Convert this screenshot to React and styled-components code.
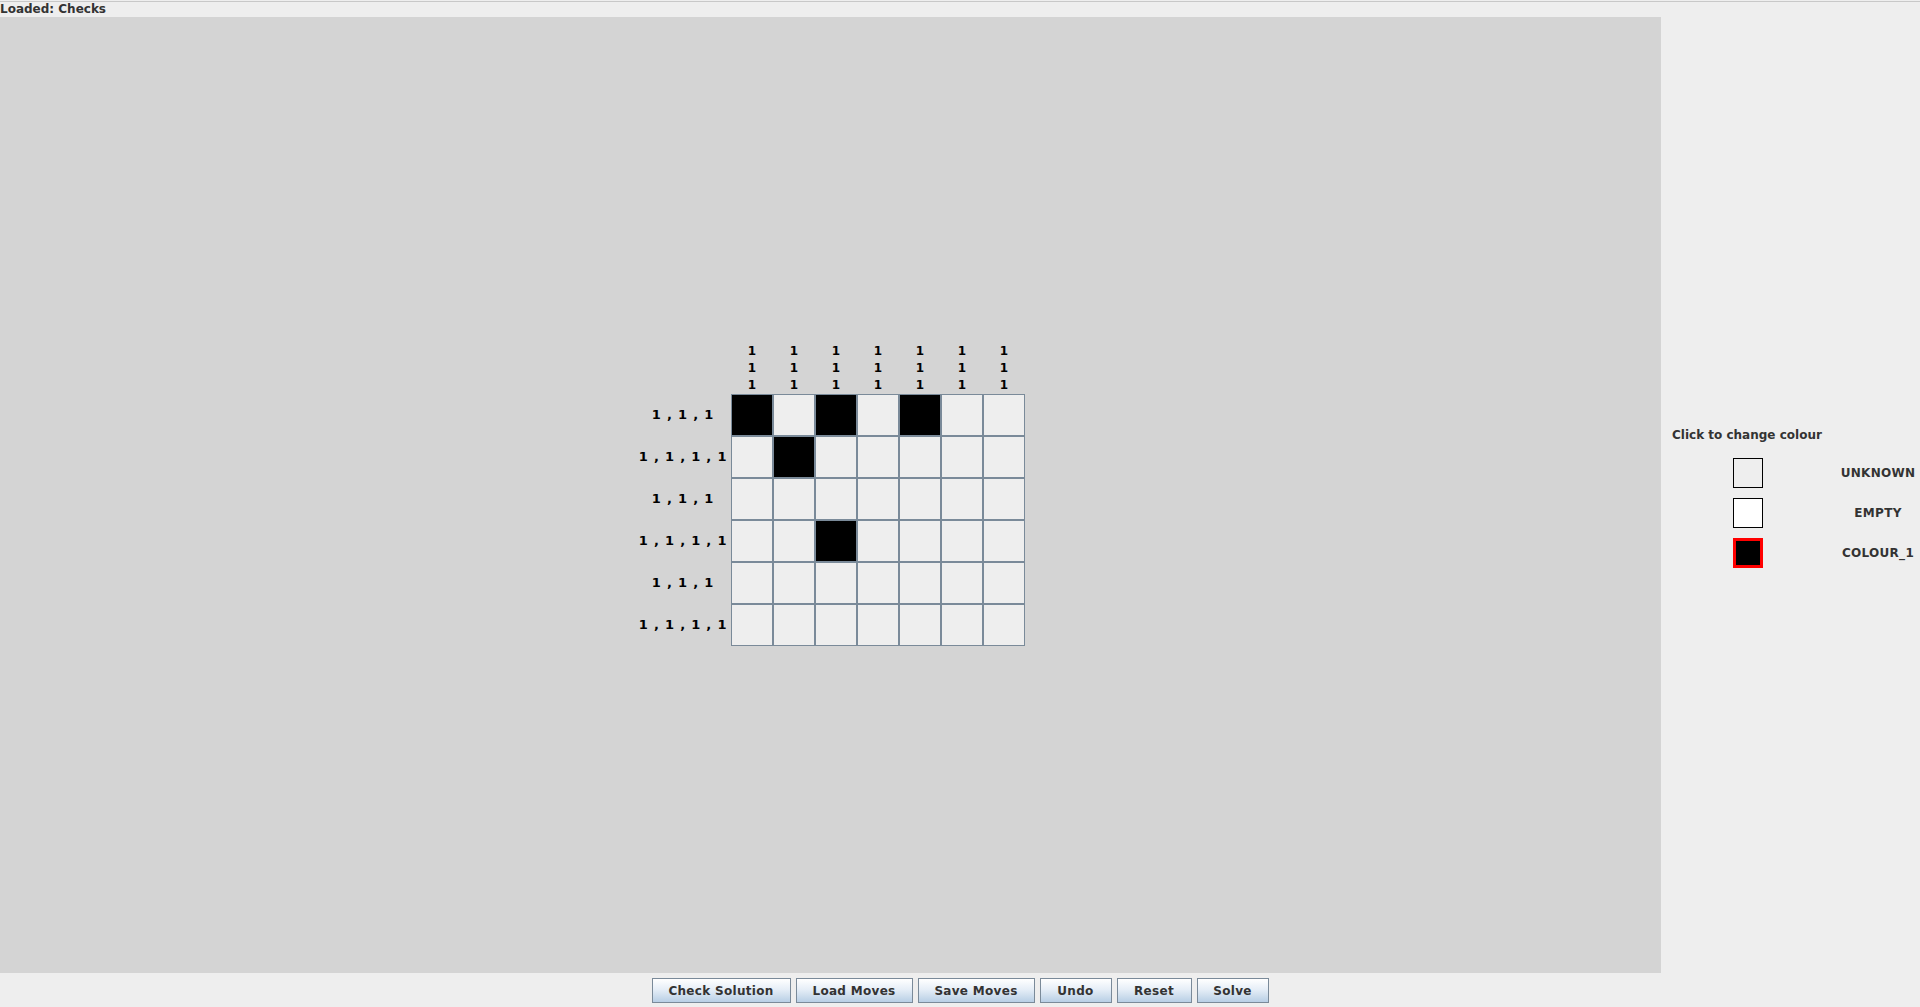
import React from 'react';
import styled, { createGlobalStyle } from 'styled-components';

const GlobalStyle = createGlobalStyle`
    html, body {
        margin: 0;
        padding: 0;
        background: #eeeeee;
        font-family: "DejaVu Sans", "Liberation Sans", sans-serif;
        overflow: hidden;
    }
`;

// puzzle data
const COLS = 7;
const ROWS = 6;
const colClues = Array.from({ length: COLS }, () => [1, 1, 1]);
const rowClues = [
    [1, 1, 1],
    [1, 1, 1, 1],
    [1, 1, 1],
    [1, 1, 1, 1],
    [1, 1, 1],
    [1, 1, 1, 1],
];
const filled = ['0-0', '0-2', '0-4', '1-1', '3-2'];

const palette = [
    { name: 'UNKNOWN', color: '#eeeeee' },
    { name: 'EMPTY', color: '#ffffff' },
    { name: 'COLOUR_1', color: '#000000', selected: true },
];

const buttons = [
    { label: 'Check Solution', width: 139 },
    { label: 'Load Moves', width: 117 },
    { label: 'Save Moves', width: 117 },
    { label: 'Undo', width: 72 },
    { label: 'Reset', width: 75 },
    { label: 'Solve', width: 72 },
];

const App = () => {
    return (
        <React.Fragment>
            <GlobalStyle />
            <Frame>
                <StatusBar>Loaded: Checks</StatusBar>
                <Main>
                    <PuzzleArea>
                        <Puzzle>
                            <Corner />
                            <ColClues>
                                {colClues.map((clue, c) => (
                                    <ColClue key={c}>
                                        {clue.map((n, i) => (
                                            <ClueLine key={i}>{n}</ClueLine>
                                        ))}
                                    </ColClue>
                                ))}
                            </ColClues>
                            <RowClues>
                                {rowClues.map((clue, r) => (
                                    <RowClue key={r}>{clue.join(' , ')}</RowClue>
                                ))}
                            </RowClues>
                            <Board>
                                {Array.from({ length: ROWS * COLS }, (_, i) => {
                                    const r = Math.floor(i / COLS);
                                    const c = i % COLS;
                                    return <Cell key={i} $filled={filled.includes(`${r}-${c}`)} />;
                                })}
                            </Board>
                        </Puzzle>
                    </PuzzleArea>
                    <SidePanel>
                        <PanelInner>
                            <PanelTitle>Click to change colour</PanelTitle>
                            {palette.map((p) => (
                                <SwatchRow key={p.name}>
                                    <Swatch $color={p.color} $selected={p.selected} />
                                    <SwatchLabel>{p.name}</SwatchLabel>
                                </SwatchRow>
                            ))}
                        </PanelInner>
                    </SidePanel>
                </Main>
                <ButtonBar>
                    {buttons.map((b) => (
                        <Button key={b.label} $width={b.width}>{b.label}</Button>
                    ))}
                </ButtonBar>
            </Frame>
        </React.Fragment>
    );
};

const Frame = styled.div`
    width: 1920px;
    height: 1007px;
    display: flex;
    flex-direction: column;
    background: #eeeeee;
`;

const StatusBar = styled.div`
    height: 15px;
    margin-top: 1px;
    border-top: 1px solid #c8c8c8;
    font-size: 12px;
    font-weight: bold;
    line-height: 15px;
    color: #333333;
    white-space: nowrap;
`;

const Main = styled.div`
    flex: 1;
    display: flex;
    min-height: 0;
`;

const PuzzleArea = styled.div`
    width: 1661px;
    flex: none;
    box-sizing: border-box;
    padding: 0 1px 1px 0;
    background: #d4d4d4;
    display: flex;
    align-items: center;
    justify-content: center;
`;

const Puzzle = styled.div`
    display: grid;
    grid-template-columns: 96px auto;
    grid-template-rows: 51px auto;
`;

const Corner = styled.div``;

const ColClues = styled.div`
    display: flex;
`;

const ColClue = styled.div`
    width: 42px;
    display: flex;
    flex-direction: column;
    align-items: center;
`;

const ClueLine = styled.div`
    height: 17px;
    line-height: 17px;
    font-size: 12px;
    font-weight: bold;
    color: #000000;
`;

const RowClues = styled.div`
    display: flex;
    flex-direction: column;
`;

const RowClue = styled.div`
    height: 42px;
    line-height: 42px;
    text-align: center;
    font-size: 13px;
    font-weight: bold;
    letter-spacing: 0.8px;
    color: #000000;
    white-space: pre;
`;

const Board = styled.div`
    display: grid;
    grid-template-columns: repeat(7, 42px);
    grid-auto-rows: 42px;
`;

const Cell = styled.div`
    box-sizing: border-box;
    border: 1px solid #7a8a99;
    background: ${(p) => (p.$filled ? '#000000' : '#eeeeee')};
`;

const SidePanel = styled.div`
    flex: 1;
    display: flex;
    align-items: center;
    overflow: hidden;
`;

const PanelInner = styled.div`
    padding-left: 11px;
    display: flex;
    flex-direction: column;
    gap: 10px;
    margin-top: 6px;
`;

const PanelTitle = styled.div`
    font-size: 12px;
    font-weight: bold;
    color: #333333;
    line-height: 14px;
    margin-bottom: 6px;
`;

const SwatchRow = styled.div`
    display: flex;
    align-items: center;
    height: 30px;
`;

const Swatch = styled.div`
    box-sizing: border-box;
    width: 30px;
    height: 30px;
    margin-left: 61px;
    background: ${(p) => p.$color};
    border: ${(p) => (p.$selected ? '3px solid #ff0000' : '1px solid #000000')};
`;

const SwatchLabel = styled.div`
    width: 84px;
    margin-left: 73px;
    text-align: center;
    font-size: 12px;
    font-weight: bold;
    letter-spacing: 0.3px;
    color: #333333;
    white-space: nowrap;
`;

const ButtonBar = styled.div`
    height: 34px;
    box-sizing: border-box;
    padding-top: 5px;
    display: flex;
    justify-content: center;
    align-items: flex-start;
    gap: 5px;
`;

const Button = styled.button`
    box-sizing: border-box;
    width: ${(p) => p.$width}px;
    height: 25px;
    padding: 0;
    border: 1px solid #7a8a99;
    border-radius: 0;
    background: linear-gradient(to bottom, #ffffff 0%, #e6eef7 45%, #b8cfe5 100%);
    font-family: "DejaVu Sans", "Liberation Sans", sans-serif;
    font-size: 12px;
    font-weight: bold;
    letter-spacing: 0.3px;
    color: #333333;
    cursor: pointer;
`;

export default App;
